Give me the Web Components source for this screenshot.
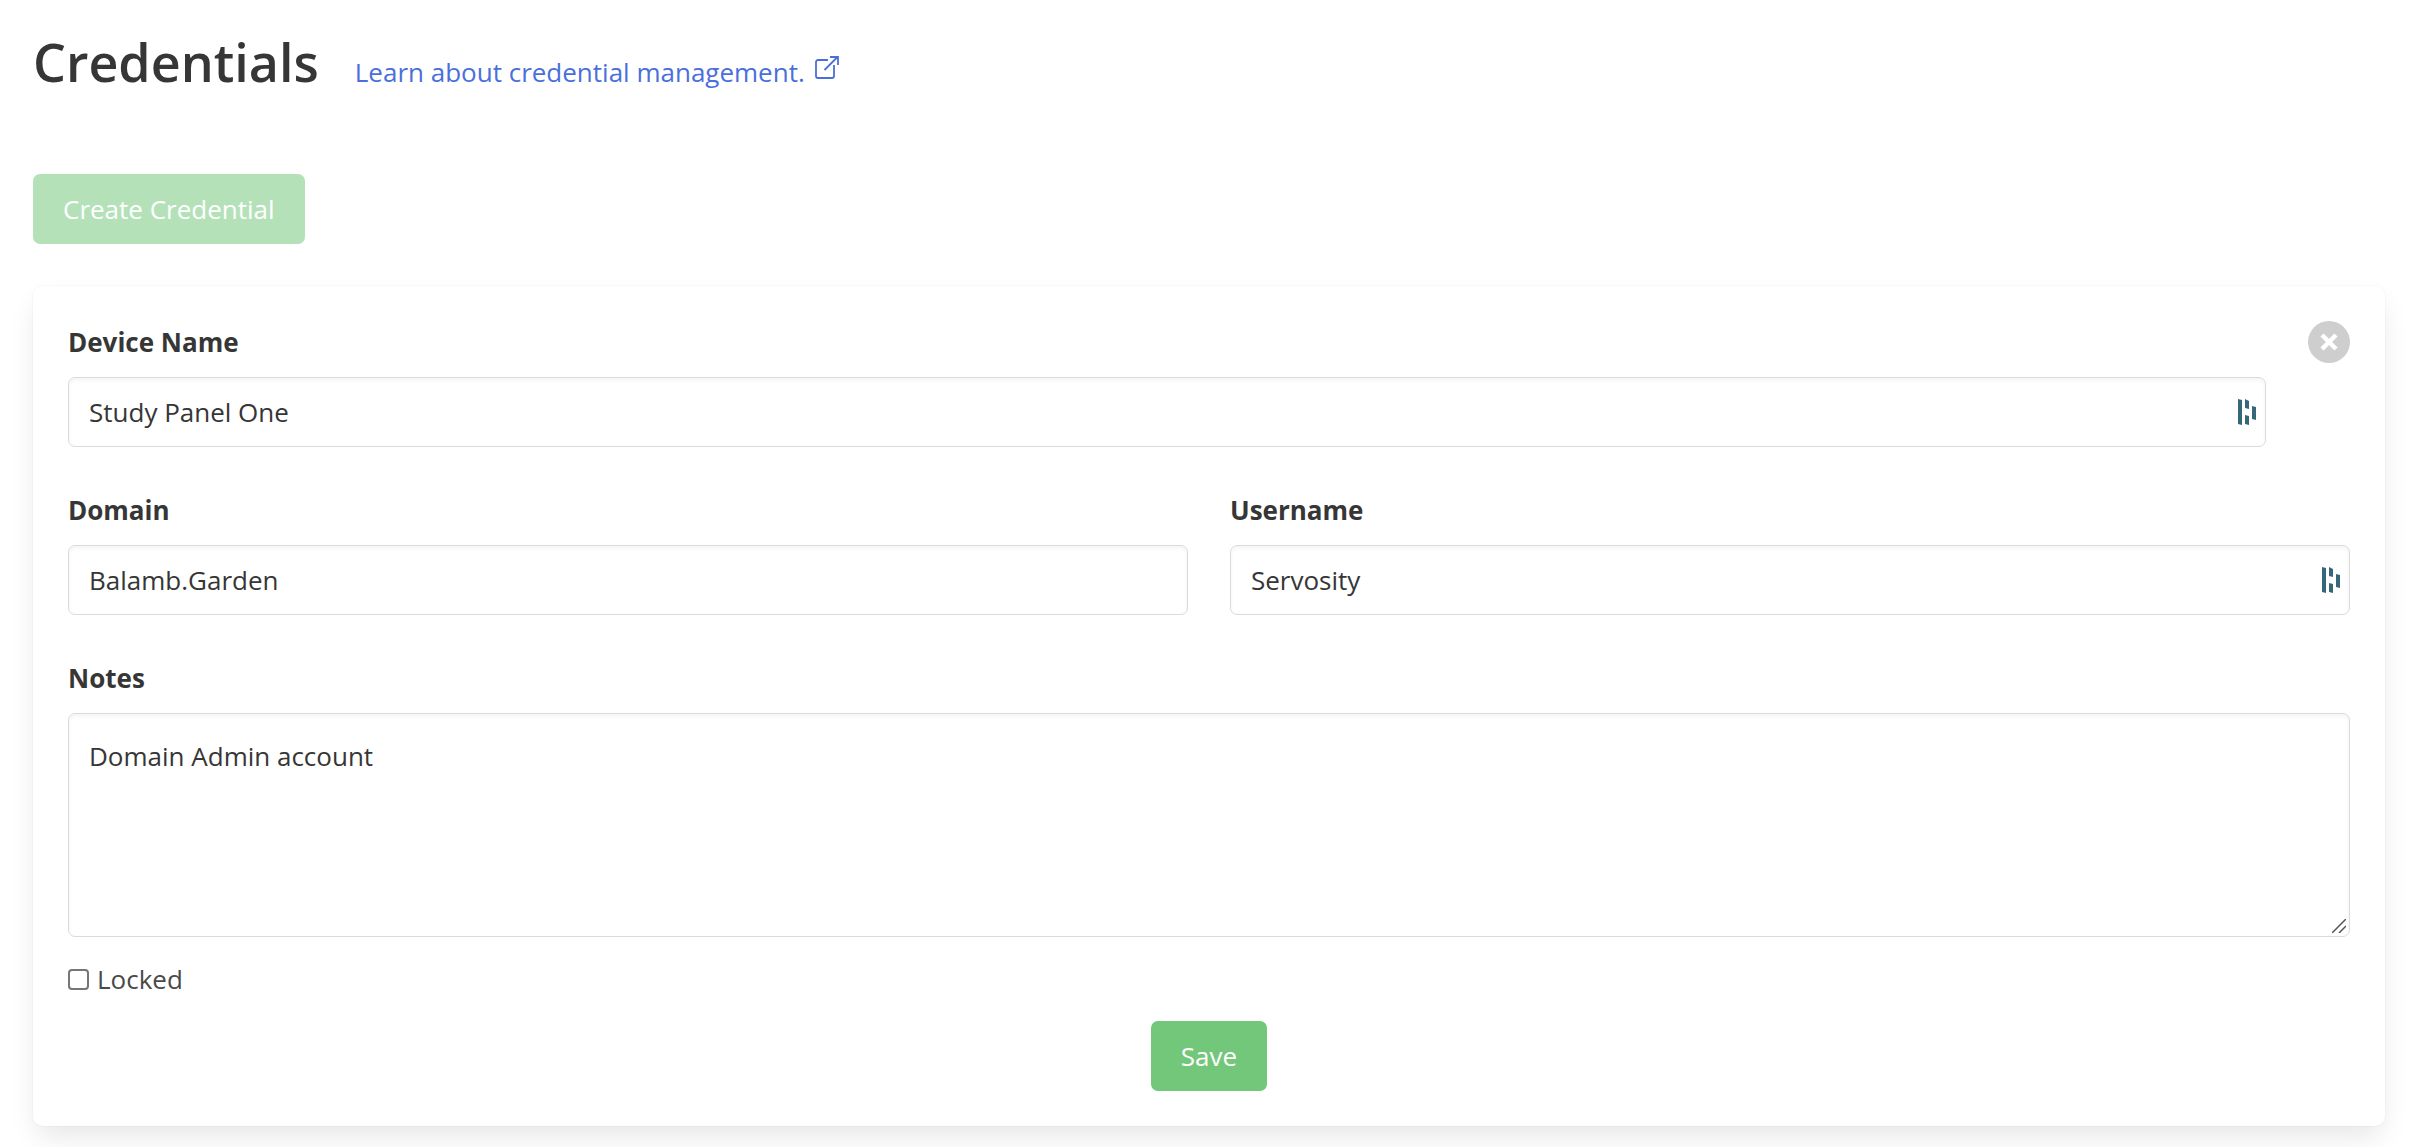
<!DOCTYPE html>
<html lang="en">
<head>
<meta charset="utf-8">
<meta name="viewport" content="width=device-width, initial-scale=1">
<title>Credentials</title>
<style>
    body {
        margin: 0;
        background-color: #fff;
        color: #4a4a4a;
        font-family: "Segoe UI", "Open Sans", "Noto Sans", sans-serif;
        font-size: 26px;
        line-height: 42px;
        --ink: #363636;
        --link: #4a6fdc;
        --green: #72c77a;
        --border: #dbdbdb;
    }
</style>
</head>
<body>
<credentials-page></credentials-page>

<script>
class PageHeader extends HTMLElement {
    constructor() {
        super();
        this.attachShadow({mode: 'open'}).innerHTML = `
            <style>
                :host {
                    display: flex;
                    align-items: baseline;
                    gap: 36px;
                }
                h1 {
                    margin: 0;
                    color: var(--ink);
                    font-size: 52px;
                    font-weight: 600;
                    line-height: 63px;
                }
            </style>
            <h1>${this.getAttribute('heading')}</h1>
            <slot></slot>
        `;
    }
}

class ExternalLink extends HTMLElement {
    constructor() {
        super();
        this.attachShadow({mode: 'open'}).innerHTML = `
            <style>
                :host { display: block; }
                a {
                    color: var(--link);
                    text-decoration: none;
                }
                svg {
                    width: 24px;
                    height: 24px;
                    margin-left: 10px;
                    vertical-align: 2px;
                }
            </style>
            <a href="${this.getAttribute('href')}"><slot></slot><svg viewBox="0 0 24 24" fill="none" stroke="currentColor" stroke-width="1.8" aria-hidden="true">
                <path d="M13 4H3a2 2 0 0 0-2 2v14a2 2 0 0 0 2 2h14a2 2 0 0 0 2-2V9"/>
                <path d="M9.500 14 22 1.500M15 1h8v8"/>
            </svg></a>
        `;
    }
}

class ActionButton extends HTMLElement {
    constructor() {
        super();
        this.attachShadow({mode: 'open'}).innerHTML = `
            <style>
                :host { display: inline-block; }
                button {
                    display: block;
                    height: 70px;
                    padding: 0 30px;
                    border: 0;
                    border-radius: 7px;
                    background-color: var(--green);
                    color: #fff;
                    font: inherit;
                    cursor: pointer;
                }
                button:disabled {
                    opacity: .52;
                    cursor: not-allowed;
                }
            </style>
            <button type="button" ${this.hasAttribute('disabled') ? 'disabled' : ''}><slot></slot></button>
        `;
    }
}

class CloseButton extends HTMLElement {
    constructor() {
        super();
        this.attachShadow({mode: 'open'}).innerHTML = `
            <style>
                :host { display: block; }
                button {
                    display: block;
                    width: 42px;
                    height: 42px;
                    padding: 0;
                    border: 0;
                    border-radius: 50%;
                    background-color: #cecece;
                    color: #fff;
                    cursor: pointer;
                }
                svg { display: block; }
            </style>
            <button type="button" aria-label="Close">
                <svg width="42" height="42" viewBox="0 0 42 42" stroke="currentColor" stroke-width="4.500">
                    <path d="M14 14 28 28M28 14 14 28"/>
                </svg>
            </button>
        `;
    }
}

class FormField extends HTMLElement {
    constructor() {
        super();
        const label = this.getAttribute('label');
        const value = this.getAttribute('value');
        const control = this.hasAttribute('multiline')
            ? `<textarea id="control">${value}</textarea>
            <svg class="grip" viewBox="0 0 14 14" stroke="#555" stroke-width="1.500" aria-hidden="true">
                <path d="M0 14 14 0M7 14 14 7"/>
            </svg>`
            : `<input id="control" type="text" value="${value}">`;
        const filler = this.hasAttribute('autofill') ? `
            <svg class="filler" viewBox="0 0 20 26" fill="#366779" aria-hidden="true">
                <path d="M1 0l4 1v25l-4-1zM8 0l4 2v8l-4-1zM8 16l4 1v9l-4-1zM15 7l4 1v13l-4-1z"/>
            </svg>` : '';

        this.attachShadow({mode: 'open'}).innerHTML = `
            <style>
                :host { display: block; }
                label {
                    display: block;
                    margin-bottom: 14px;
                    color: var(--ink);
                    font-weight: 700;
                }
                .control { position: relative; }
                input, textarea {
                    display: block;
                    box-sizing: border-box;
                    width: 100%;
                    height: 70px;
                    margin: 0;
                    padding: 0 20px;
                    border: 1px solid var(--border);
                    border-radius: 7px;
                    background-color: #fff;
                    box-shadow: inset 0 2px 4px rgba(10, 10, 10, .05);
                    color: var(--ink);
                    font: inherit;
                }
                textarea {
                    height: 224px;
                    padding: 21px 20px;
                    resize: vertical;
                }
                textarea::-webkit-resizer { background: transparent; }
                /* drawn over the corner of the textarea */
                .grip {
                    position: absolute;
                    right: 4px;
                    bottom: 4px;
                    width: 14px;
                    height: 14px;
                    pointer-events: none;
                }
                /* password manager badge, sits over the text box */
                .filler {
                    position: absolute;
                    top: 22px;
                    right: 9px;
                    width: 20px;
                    height: 26px;
                }
            </style>
            <label for="control">${label}</label>
            <div class="control">${control}${filler}</div>
        `;
    }
}

class CheckField extends HTMLElement {
    constructor() {
        super();
        this.attachShadow({mode: 'open'}).innerHTML = `
            <style>
                :host { display: flex; }
                label {
                    display: flex;
                    align-items: center;
                    gap: 8px;
                    cursor: pointer;
                }
                input {
                    appearance: none;
                    width: 21px;
                    height: 21px;
                    margin: 0;
                    border: 2px solid #767676;
                    border-radius: 4px;
                    background-color: #fff;
                }
                input:checked { background-color: var(--link); }
            </style>
            <label><input type="checkbox"><slot></slot></label>
        `;
    }
}

class CredentialCard extends HTMLElement {
    constructor() {
        super();
        this.attachShadow({mode: 'open'}).innerHTML = `
            <style>
                :host { display: block; }
                form {
                    display: flex;
                    flex-direction: column;
                    gap: 42px;
                    padding: 35px;
                    border-radius: 10px;
                    background-color: #fff;
                    box-shadow: 0 14px 28px -4px rgba(10, 10, 10, .1), 0 0 0 1px rgba(10, 10, 10, .02);
                }
                .row {
                    display: flex;
                    align-items: flex-start;
                    gap: 42px;
                }
                .row form-field { flex: 1; }
                .notes {
                    display: flex;
                    flex-direction: column;
                    gap: 21px;
                }
                .notes action-button { align-self: center; }
            </style>
            <form>
                <div class="row">
                    <form-field label="Device Name" value="Study Panel One" autofill></form-field>
                    <close-button></close-button>
                </div>
                <div class="row">
                    <form-field label="Domain" value="Balamb.Garden"></form-field>
                    <form-field label="Username" value="Servosity" autofill></form-field>
                </div>
                <div class="notes">
                    <form-field label="Notes" value="Domain Admin account" multiline></form-field>
                    <check-field>Locked</check-field>
                    <action-button>Save</action-button>
                </div>
            </form>
        `;
    }
}

class CredentialsPage extends HTMLElement {
    constructor() {
        super();
        this.attachShadow({mode: 'open'}).innerHTML = `
            <style>
                :host {
                    display: block;
                    padding: 30px 37px 21px 33px;
                }
                .toolbar {
                    display: flex;
                    margin: 81px 0 42px;
                }
            </style>
            <page-header heading="Credentials">
                <external-link href="#credential-management">Learn about credential management.</external-link>
            </page-header>
            <div class="toolbar">
                <action-button disabled>Create Credential</action-button>
            </div>
            <credential-card></credential-card>
        `;
    }
}

customElements.define('page-header', PageHeader);
customElements.define('external-link', ExternalLink);
customElements.define('action-button', ActionButton);
customElements.define('close-button', CloseButton);
customElements.define('form-field', FormField);
customElements.define('check-field', CheckField);
customElements.define('credential-card', CredentialCard);
customElements.define('credentials-page', CredentialsPage);
</script>
</body>
</html>
